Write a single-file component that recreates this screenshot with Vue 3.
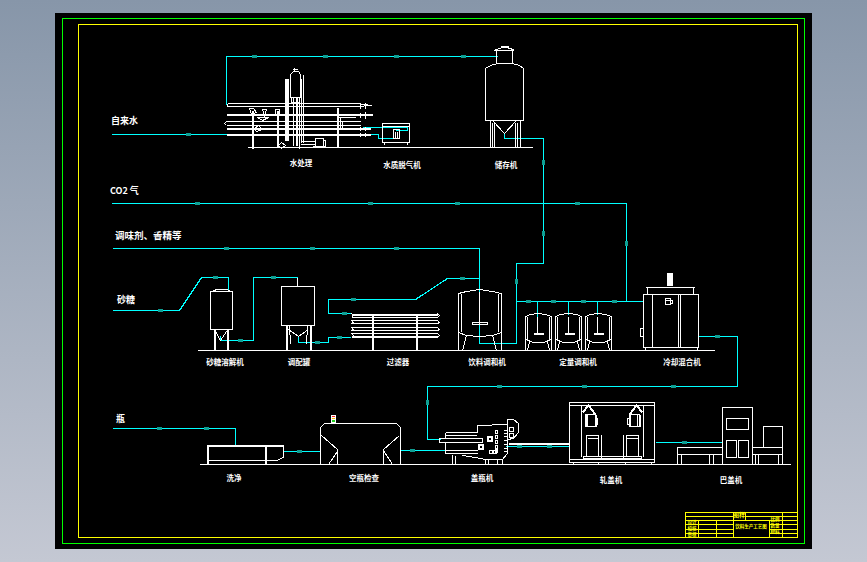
<script setup>
// flow pipes, page coordinates (viewBox matches the black sheet's place in the window)
const pipes = [
  'M226 104V56H497',
  'M111 134H226',
  'M362 127H407V130H395',
  'M362 134H378V138H392',
  'M504 133V138H543V263H516V301H643',
  'M537 301V316M568 301V314M597 301V314',
  'M111 203H626V301',
  'M112 248H479V291',
  'M479 304V343H516V301',
  'M112 310H179L201 277H228V290',
  'M220 335V340H253V277H297',
  'M298 335V342H328V337H350',
  'M350 313H328V299H415L447 278H479',
  'M698 336H737V386H427V439H440',
  'M112 428H235V445',
  'M283 451H320',
  'M400 450H445',
  'M505 446H569',
  'M655 442H722'
]

const arrows = [
  [252, 56], [323, 56], [394, 56], [461, 56],
  [186, 134], [195, 203], [368, 203], [455, 203], [575, 203],
  [224, 248], [310, 248], [394, 248],
  [158, 310], [213, 277], [238, 340], [271, 277],
  [315, 342], [337, 337], [342, 313], [351, 299], [460, 278],
  [526, 301], [551, 301], [581, 301], [612, 301],
  [715, 336], [497, 386], [582, 386], [671, 386],
  [157, 428], [204, 428], [297, 451], [410, 450],
  [517, 446], [547, 446], [682, 442]
].map(([x, y]) => ({ x, y, w: 5, h: 3, key: x + '-' + y, ox: x, oy: y - 1 }))

const vArrows = [[543, 160], [543, 231], [626, 241], [516, 279], [427, 400]]
  .map(([x, y]) => ({ key: x + '-' + y, x: x - 1, y }))

// equipment outlines
const thin = [
  'M247 147H532', 'M197 350H714', 'M199 464H790',
  // storage tank
  'M485 120V68L490 65L497 63H512L519 65L523 68V120Z',
  'M496 63V50H512V63M494 50Q504 44 514 50M500 47H508V46H500',
  'M490 120V147M492 122V147M494 122V147M515 122V147M517 122V147M520 120V147',
  'M492 120L504 133L516 120',
  // deaerator
  'M382 123H409V142H382ZM382 126H409M384 142V144M407 142V144',
  'M393 129H399V138H393ZM395 131V137M397 131V137',
  // water treatment
  'M227 103H356M227 106H356M227 103V106',
  'M226 121H360M226 125H360M226 121L224 123L226 125',
  'M356 103L371 105L356 106M360 102V108M365 102V108',
  'M360 112V117M365 111V118M360 132V136M365 132V136M360 126V130M365 126V130',
  'M337 117H355M340 117V127M342 120V127',
  'M285 78V140M288 78V140M303 74V142M301 78V142',
  'M290 74L293 71H298L300 74V97H290ZM292 69H297M294 67V71',
  'M293 97V145M297 97V145M299 97V148M291 97H299V102H291Z',
  'M300 141H315M300 144H315M315 138H323V146H315ZM323 140H325V146M312 146H325V147H312',
  'M278 145L281 142L285 145L281 148ZM277 147H286',
  'M249 108L253 108L256 112L251 114ZM262 109H266L264 116ZM275 109H279V114H275ZM257 117H268L262 120ZM254 128L258 125L262 129L256 131Z',
  // sugar tank
  'M210 291H232V329H210ZM212 291L216 289H226L231 291',
  'M215 331L220 340L226 331',
  // blending tank
  'M281 286H314V325H281ZM297 286V277',
  'M288 329L298 336L308 329M289 325L290 344M307 325L306 344',
  // filter
  'M351 317H437M351 320H437M351 323H437M351 327H437M351 330H437M351 333H437',
  'M351 313L353 315L351 317M351 320L353 322L351 323M351 327L353 329L351 330M351 333L353 335L351 337',
  'M437 313L439 315L437 317M437 320L439 322L437 323M437 327L439 329L437 330M437 333L439 335L437 337',
  // mix tank
  'M458 293L466 291L479 289L492 291L501 293V332L492 335L479 336L466 335L458 332ZM461 293V331M498 293V331',
  'M458 332V350M501 332V350M466 335L462 350M492 335L496 350M479 291V323',
  'M472 322H487V324H472Z',
  // dosing tanks
  'M525 316L530 314L537 313L545 314L551 316V339L543 342H533L525 339ZM527 316V339M549 316V339',
  'M525 339V350M551 339V350M529 341L527 350M547 341L549 350M537 316V333',
  'M555 316L560 314L568 313L576 314L581 316V339L573 342H563L555 339ZM557 316V339M579 316V339',
  'M555 339V350M581 339V350M559 341L557 350M577 341L579 350M568 316V333',
  'M585 316L590 314L597 313L605 314L611 316V339L603 342H593L585 339ZM587 316V339M609 316V339',
  'M585 339V350M611 339V350M589 341L587 350M607 341L609 350M597 316V333',
  // cold mixer
  'M643 294H698V347H643ZM652 294V347M678 294V347M680 294V347',
  'M645 287H694M647 287V294M693 287V294M645 347V350M697 347V350',
  'M640 328H643V336H640Z',
  'M665 298H670V304H665ZM665 300H672V303H670',
  // washer
  'M265 445H283V457L276 460H207',
  // inspection
  'M320 464V427L324 423H396L400 427V464',
  'M321 435L337 449V464M337 451L328 464M399 435L383 449V464M383 450L392 464',
  // filler
  'M445 432H477V425L507 424V419H513L518 423V432L513 438L507 439V453L502 459H485L475 457L462 455',
  'M439 438H482V442H439ZM445 432V438M445 442V453H477M445 450H477',
  'M452 454V464M455 455V464M485 458V464M488 458V464M497 459V464M502 459V464',
  'M445 435H476M507 424V439M509 427H513V431H509ZM509 433H513V437H509Z',
  'M495 430H497V433H495ZM495 435H497V438H495ZM495 440H497V443H495ZM495 445H497V448H495ZM495 449H497V452H495Z',
  'M503 430H507M503 433H507M503 436H507M503 440H507M503 444H507M503 448H507M503 451H507',
  'M489 450H492V453H489ZM493 450H496V453H493Z',
  // capper
  'M569 402H654V462H569ZM569 405H654M569 459H654',
  'M581 405V456M643 405V456M573 462V464M598 462V464M625 462V464M651 462V464',
  'M585 414H595V426H585ZM587 414V426M595 418H597V424H595',
  'M629 414H639V426H629ZM637 414V426M629 418H627V424H629',
  'M586 435H598V456H586ZM587 438H598M626 435H638V456H626ZM626 438H637',
  'M601 434V457M623 434V457M583 456H641V458H583Z',
  // labeler
  'M722 407H752V464H722ZM726 418H748V429H726ZM726 440H736V457H726ZM738 440H748V457H738Z',
  'M722 447H677V464M722 454H677M681 454V464M709 454V464M713 454V464',
  'M752 447H782V464M752 454H782M755 454V464M758 454V464M778 454V464M763 447V426H782V447'
]

const thick = [
  'M252 110V148M277 110V147M337 107V147',
  'M226 114H372M226 128H370M226 134H370',
  'M286 78V140M296 97V145',
  'M214 329V350M227 329V350M286 325V350M310 325V350',
  'M351 314H437M351 336H437',
  'M372 313V350M416 313V350',
  'M533 333H543M564 333H574M593 333H603',
  'M207 464V445H283M265 445V464',
  'M582 412L588 405L595 414M642 412L636 405L629 414',
  'M585 414V426M595 414V426M629 414V426M639 414V426',
  'M508 443H569'
]

const groundLabels = [
  { t: '水处理', x: 301, y: 166 },
  { t: '水质脱气机', x: 402, y: 168 },
  { t: '储存机', x: 506, y: 168 },
  { t: '砂糖溶解机', x: 225, y: 365 },
  { t: '调配罐', x: 299, y: 365 },
  { t: '过滤器', x: 398, y: 365 },
  { t: '饮料调和机', x: 487, y: 365 },
  { t: '定量调和机', x: 578, y: 365 },
  { t: '冷却混合机', x: 682, y: 365 },
  { t: '洗净', x: 234, y: 481 },
  { t: '空瓶检查', x: 364, y: 481 },
  { t: '盖瓶机', x: 482, y: 481 },
  { t: '轧盖机', x: 611, y: 483 },
  { t: '巴盖机', x: 731, y: 483 }
]

const feedLabels = [
  { t: '自来水', x: 111, y: 124, size: 9 },
  { t: 'CO2 气', x: 110, y: 194, size: 9 },
  { t: '调味剂、香精等', x: 115, y: 239, size: 9.5 },
  { t: '砂糖', x: 117, y: 303, size: 9 },
  { t: '瓶', x: 116, y: 422, size: 9 }
]

const titleGrid = [
  'M685 512H797V537H685ZM733 512V537M745 512V520',
  'M698 520V537M716 520V537M769 520V537M782 512V537',
  'M685 516H733M745 516H797M685 520H797M685 524H733M769 524H797',
  'M685 529H733M769 529H797M685 533H733M769 533H797'
]
</script>

<template>
  <div class="window">
    <svg class="sheet" viewBox="55 13 757 536" width="757" height="536">
      <rect class="border-green" x="62.5" y="18.5" width="742" height="525" />
      <rect class="border-yellow" x="78.5" y="24.5" width="719" height="513" />

      <g class="pipe">
        <path v-for="d in pipes" :key="d" :d="d" transform="translate(.5 .5)" />
      </g>
      <g class="arrows">
        <rect v-for="a in arrows" :key="a.key" :x="a.ox" :y="a.oy" :width="a.w" :height="a.h" />
        <rect v-for="a in vArrows" :key="a.key" :x="a.x" :y="a.y" width="3" height="5" />
      </g>

      <g class="gear">
        <path v-for="d in thin" :key="d" :d="d" transform="translate(.5 .5)" />
      </g>
      <g class="gear heavy">
        <path v-for="d in thick" :key="d" :d="d" transform="translate(.5 .5)" />
      </g>

      <!-- lamp on the inspection hood -->
      <rect class="lamp" x="331" y="415" width="5" height="8" />
      <rect x="332" y="416" width="3" height="1" fill="#ff2020" />
      <rect x="332" y="418" width="3" height="1" fill="#ffc000" />
      <rect x="332" y="420" width="3" height="2" fill="#20d020" />
      <rect x="667" y="273" width="6" height="13" fill="#fff" />
      <circle class="ring" cx="490" cy="439" r="2.5" />
      <circle class="ring" cx="481" cy="447" r="2.5" />

      <text v-for="l in groundLabels" :key="l.t" class="label mid" :x="l.x" :y="l.y">{{ l.t }}</text>
      <text v-for="l in feedLabels" :key="l.t" class="label" :x="l.x" :y="l.y" :font-size="l.size">{{ l.t }}</text>

      <g class="grid">
        <path v-for="d in titleGrid" :key="d" :d="d" transform="translate(.5 .5)" />
      </g>
      <text class="stamp" x="739" y="517">图样</text>
      <text class="stamp small" x="751" y="528">饮料生产工艺图</text>
      <text class="stamp small" x="692" y="524">设计</text>
      <text class="stamp small" x="692" y="530">校核</text>
      <text class="stamp small" x="692" y="536">审核</text>
      <text class="stamp small" x="775" y="521">比例</text>
      <text class="stamp small" x="775" y="527">数量</text>
      <text class="stamp small" x="775" y="533">材料</text>
    </svg>
  </div>
</template>

<style scoped>
.window {
  width: 867px;
  height: 562px;
  display: flex;
  align-items: center;
  justify-content: center;
  background: linear-gradient(180deg, #8796a9 0%, #c4c8d3 100%);
}

.sheet {
  display: block;
  background: #000;
  shape-rendering: crispEdges;
}

.border-green {
  fill: none;
  stroke: #00ff00;
}

.border-yellow {
  fill: none;
  stroke: #ffff00;
}

.pipe path {
  fill: none;
  stroke: #00ffff;
  stroke-width: 1.2;
}

.arrows rect {
  fill: #0f9e92;
}

.gear path {
  fill: none;
  stroke: #fff;
}

.gear.heavy path {
  stroke-width: 2;
}

.lamp {
  fill: #fff;
}

.ring {
  fill: none;
  stroke: #fff;
  stroke-width: 2;
}

.label {
  fill: #fff;
  font-family: "Noto Sans CJK SC", "Liberation Sans", sans-serif;
  font-weight: 700;
}

.mid {
  font-size: 7.5px;
  text-anchor: middle;
}

.grid path {
  fill: none;
  stroke: #ffff00;
}

.stamp {
  fill: #ffff00;
  font-family: "Noto Sans CJK SC", sans-serif;
  font-size: 6px;
  font-weight: 700;
  text-anchor: middle;
}

.stamp.small {
  font-size: 4.5px;
}
</style>

<style>
html,
body {
  margin: 0;
  background: #000;
}
</style>
